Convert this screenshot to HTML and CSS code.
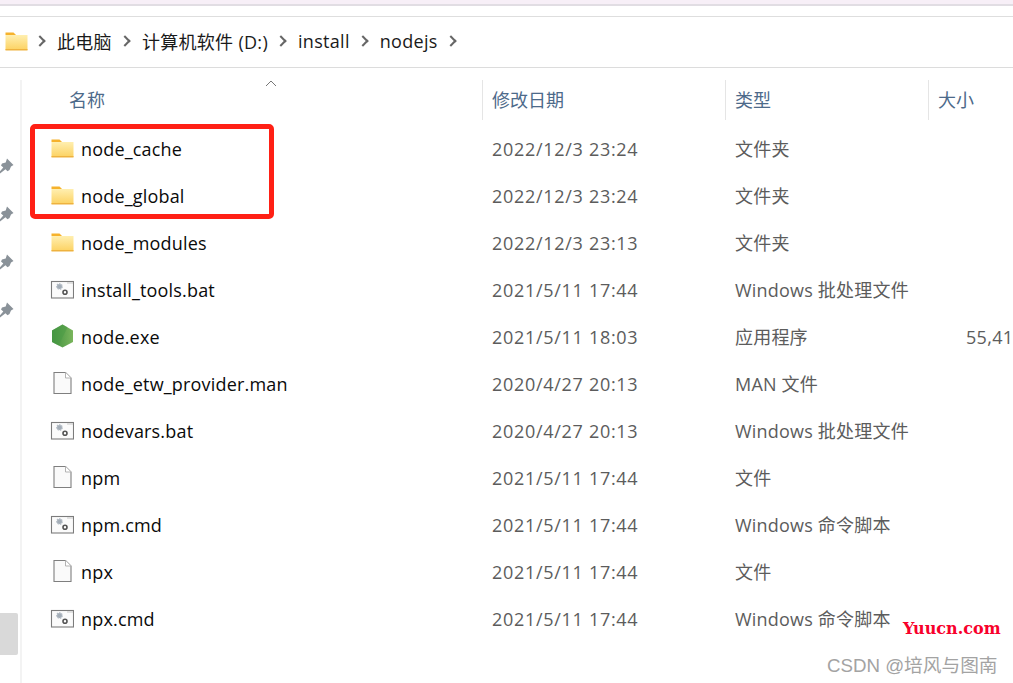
FILE: index.html
```html
<!DOCTYPE html>
<html lang="zh">
<head>
<meta charset="utf-8">
<title>nodejs</title>
<link rel="stylesheet" href="styles.css">
</head>
<body>
<svg class="defs" width="0" height="0" aria-hidden="true">
  <defs>
    <linearGradient id="fg" x1="0" y1="0" x2="0" y2="1"><stop offset="0" stop-color="#ffefb0"/><stop offset="1" stop-color="#fcd262"/></linearGradient>
    <linearGradient id="ng" x1="0" y1="0" x2="1" y2="0"><stop offset="0" stop-color="#3d8f3e"/><stop offset="1" stop-color="#7ab55c"/></linearGradient>
    <symbol id="folder" viewBox="0 0 24 24"><path d="M1.500 3.500h8l2.500 2.500H1.500z" fill="#f6b22c"/><path d="M1.500 6h22v15h-22z" fill="url(#fg)"/><path d="M1.500 20h22v1.500h-22z" fill="#eeb23f"/></symbol>
    <symbol id="bat" viewBox="0 0 24 24"><rect x="1.500" y="4.500" width="22" height="16.500" fill="#fbfbfb" stroke="#7c7c7c" stroke-width="1.100"/><path d="M17.500 6h5" stroke="#999" stroke-width="1" stroke-dasharray="1 1"/><circle cx="9.500" cy="9.500" r="2.600" fill="#a3adb7" stroke="#b4bcc5" stroke-width="1.500" stroke-dasharray="1.400 .9"/><circle cx="15" cy="15.300" r="2" fill="#fff" stroke="#555" stroke-width="1.600"/></symbol>
    <symbol id="doc" viewBox="0 0 24 24"><path d="M4 1.500h11.500L21 7v15.500H4z" fill="#fafafa" stroke="#7f7f7f" stroke-width="1.100"/><path d="M15.500 1.500V7H21" fill="#fff" stroke="#b3b3b3" stroke-width="1"/></symbol>
    <symbol id="node" viewBox="0 0 24 24"><path d="M12.500 .5l10.500 6v11.500L12.500 23.500 2 18V6.500z" fill="url(#ng)"/><path d="M12.500 .5L2 6.500V18l6.500 3.500L17.500 3.300z" fill="#4a9a45" opacity=".55"/></symbol>
    <symbol id="pin" viewBox="0 0 16 16"><path d="M9 .5l6.500 6.500-2.500 1.500-1.500 3.500-2 1.200-2-2L2 15.500l-1-1 4.300-5-2.300-2 1-2 3.700-1z" fill="#8a9299"/></symbol>
  </defs>
</svg>

<div class="topband"></div>

<nav class="crumbs">
  <svg class="crumb-folder"><use href="#folder"/></svg>
  <span class="sep"></span><span class="crumb">此电脑</span>
  <span class="sep"></span><span class="crumb">计算机软件 (D:)</span>
  <span class="sep"></span><span class="crumb">install</span>
  <span class="sep"></span><span class="crumb">nodejs</span>
  <span class="sep"></span>
</nav>

<main class="pane">
  <aside class="side">
    <div class="pins">
      <svg class="pin"><use href="#pin"/></svg>
      <svg class="pin"><use href="#pin"/></svg>
      <svg class="pin"><use href="#pin"/></svg>
      <svg class="pin"><use href="#pin"/></svg>
    </div>
    <div class="thumb"></div>
  </aside>

  <section class="list">
    <svg class="sort" viewBox="0 0 12 7"><path d="M1 6l5-5 5 5" fill="none" stroke="#777" stroke-width="1"/></svg>
    <div class="row head">
      <div class="hcell first">名称</div>
      <div class="hcell">修改日期</div>
      <div class="hcell">类型</div>
      <div class="hcell">大小</div>
    </div>
    <div class="rows">
      <div class="row item"><div class="name"><svg class="ico"><use href="#folder"/></svg><span>node_cache</span></div><div class="date">2022/12/3 23:24</div><div class="type">文件夹</div><div class="size"></div></div>
      <div class="row item"><div class="name"><svg class="ico"><use href="#folder"/></svg><span>node_global</span></div><div class="date">2022/12/3 23:24</div><div class="type">文件夹</div><div class="size"></div></div>
      <div class="row item"><div class="name"><svg class="ico"><use href="#folder"/></svg><span>node_modules</span></div><div class="date">2022/12/3 23:13</div><div class="type">文件夹</div><div class="size"></div></div>
      <div class="row item"><div class="name"><svg class="ico"><use href="#bat"/></svg><span>install_tools.bat</span></div><div class="date">2021/5/11 17:44</div><div class="type">Windows 批处理文件</div><div class="size"></div></div>
      <div class="row item"><div class="name"><svg class="ico"><use href="#node"/></svg><span>node.exe</span></div><div class="date">2021/5/11 18:03</div><div class="type">应用程序</div><div class="size">55,41</div></div>
      <div class="row item"><div class="name"><svg class="ico"><use href="#doc"/></svg><span>node_etw_provider.man</span></div><div class="date">2020/4/27 20:13</div><div class="type">MAN 文件</div><div class="size"></div></div>
      <div class="row item"><div class="name"><svg class="ico"><use href="#bat"/></svg><span>nodevars.bat</span></div><div class="date">2020/4/27 20:13</div><div class="type">Windows 批处理文件</div><div class="size"></div></div>
      <div class="row item"><div class="name"><svg class="ico"><use href="#doc"/></svg><span>npm</span></div><div class="date">2021/5/11 17:44</div><div class="type">文件</div><div class="size"></div></div>
      <div class="row item"><div class="name"><svg class="ico"><use href="#bat"/></svg><span>npm.cmd</span></div><div class="date">2021/5/11 17:44</div><div class="type">Windows 命令脚本</div><div class="size"></div></div>
      <div class="row item"><div class="name"><svg class="ico"><use href="#doc"/></svg><span>npx</span></div><div class="date">2021/5/11 17:44</div><div class="type">文件</div><div class="size"></div></div>
      <div class="row item"><div class="name"><svg class="ico"><use href="#bat"/></svg><span>npx.cmd</span></div><div class="date">2021/5/11 17:44</div><div class="type">Windows 命令脚本</div><div class="size"></div></div>
    </div>
  </section>
</main>

<div class="highlight"></div>
<div class="mark-red">Yuucn.com</div>
<div class="mark-gray">CSDN @培风与图南</div>
</body>
</html>
```
FILE: styles.css
```css
* { box-sizing: border-box; }
html, body { margin: 0; height: 100%; }
body {
  position: relative;
  width: 1013px;
  height: 683px;
  overflow: hidden;
  background: #fff;
  color: #0a0a0a;
  font-family: "Open Sans", "Noto Sans CJK SC", sans-serif;
  font-size: 18px;
}
.defs { position: absolute; }

.topband {
  height: 17px;
  background: linear-gradient(#f7eff7 0 4px, #e1dde3 4px 6px, #fff 6px 16px, #dedede 16px 17px);
}

.crumbs {
  display: flex;
  align-items: center;
  height: 51px;
  padding-left: 4px;
  padding-bottom: 2px;
  border-bottom: 1px solid #dcdcdc;
  color: #1a1a1a;
  letter-spacing: .3px;
}
.crumb-folder { width: 24px; height: 24px; margin-right: 8px; }
.sep {
  width: 8px;
  height: 8px;
  margin-right: 13px;
  border-top: 2px solid #666;
  border-right: 2px solid #666;
  transform: rotate(45deg);
}
.crumb { margin-right: 9px; }

.pane { display: flex; height: 615px; }
.side {
  position: relative;
  flex: none;
  width: 22px;
  margin-top: 12px;
  border-right: 2px solid #f3f3f3;
}
.pins {
  display: flex;
  flex-direction: column;
  gap: 32px;
  padding-top: 78px;
}
.pin { width: 16px; height: 16px; margin-left: -2px; }
.thumb {
  position: absolute;
  left: 0;
  top: 533px;
  width: 18px;
  height: 42px;
  background: #d9d9d9;
  border-radius: 0 2px 2px 0;
}

.list { position: relative; flex: 1; min-width: 0; padding-top: 12px; }
.sort { position: absolute; left: 243px; top: 12px; width: 12px; height: 7px; }
.row {
  display: grid;
  grid-template-columns: 460px 243px 203px 90px;
}
.head { height: 40px; align-items: stretch; color: #4d6a8a; margin-bottom: 4px; }
.hcell {
  display: flex;
  align-items: center;
  padding: 0 0 3px 9px;
  border-left: 1px solid #e5e5e5;
}
.hcell.first { border-left: 0; padding-left: 47px; }

.rows { display: flex; flex-direction: column; }
.item { height: 47px; align-items: center; }
.name { display: flex; align-items: center; padding-left: 28px; white-space: nowrap; }
.name span { padding-top: 2px; letter-spacing: .18px; }
.ico { flex: none; width: 24px; height: 24px; margin-right: 7px; }
.date { padding: 2px 0 0 10px; color: #5c5c5c; white-space: nowrap; letter-spacing: .7px; }
.type { padding-left: 10px; color: #5c5c5c; white-space: nowrap; letter-spacing: .2px; }
.size { color: #5c5c5c; white-space: nowrap; padding: 2px 0 0 38px; letter-spacing: .3px; }

.highlight {
  position: absolute;
  left: 30px;
  top: 124px;
  width: 244px;
  height: 95px;
  border: 5px solid #ff2015;
  border-radius: 5px;
}
.mark-red {
  position: absolute;
  left: 903px;
  top: 619px;
  font-family: "DejaVu Serif", serif;
  font-weight: bold;
  font-size: 16px;
  color: #f8002b;
  white-space: nowrap;
}
.mark-gray {
  position: absolute;
  left: 827px;
  top: 650px;
  font-family: "Liberation Sans", "Noto Sans CJK SC", sans-serif;
  font-size: 18.700px;
  color: #a3a3a3;
  white-space: nowrap;
}
```
